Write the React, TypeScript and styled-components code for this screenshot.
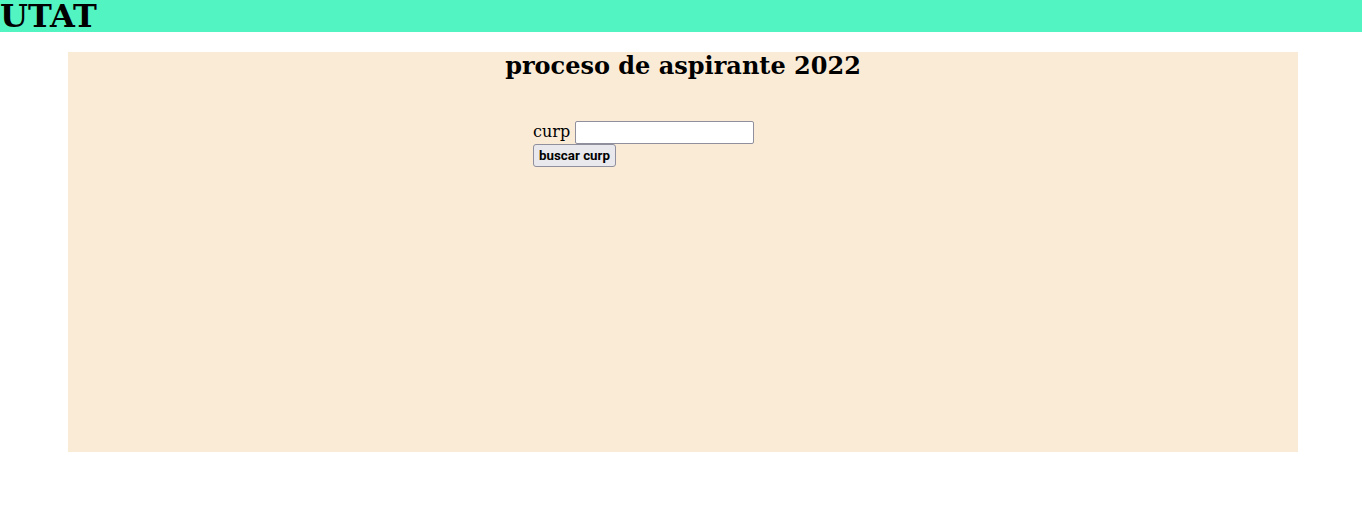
import React from "react";
import styled, { createGlobalStyle } from "styled-components";

const Global = createGlobalStyle`
  body {
    margin: 0;
    font-family: "DejaVu Serif", serif;
    background: #ffffff;
  }
`;

const Header = styled.header`
  height: 32px;
  background: #52f5c2;
  display: flex;
  align-items: center;
`;

const Brand = styled.h1`
  margin: 0;
  font-family: "DejaVu Serif", serif;
  font-weight: bold;
  font-size: 32px;
  line-height: 32px;
  color: #000;
`;

const Panel = styled.main`
  margin: 20px 0 0 68px;
  width: 1230px;
  height: 400px;
  background: #faebd7;
  display: flex;
  flex-direction: column;
  align-items: center;
`;

const Title = styled.h2`
  margin: 0;
  font-family: "DejaVu Serif", serif;
  font-weight: bold;
  font-size: 24px;
  line-height: 28px;
`;

const Form = styled.form`
  width: 300px;
  margin-top: 41px;
  display: flex;
  flex-direction: column;
  align-items: flex-start;
`;

const Row = styled.div`
  display: flex;
  align-items: center;
  gap: 5px;
`;

const Label = styled.label`
  font-family: "DejaVu Serif", serif;
  font-size: 16px;
  line-height: 21px;
  margin-bottom: 2px;
  color: #000;
`;

const Input = styled.input`
  box-sizing: border-box;
  width: 179px;
  height: 23px;
  border: 1px solid #8f8f9d;
  border-radius: 2px;
  background: #fff;
  padding: 1px 2px;
`;

const Button = styled.button`
  box-sizing: border-box;
  height: 23px;
  width: 83px;
  padding: 0;
  border: 1px solid #8f8f9d;
  border-radius: 3px;
  background: #e9e9ed;
  font-family: Roboto, "Liberation Sans", sans-serif;
  font-weight: bold;
  font-size: 13.33px;
  color: #000;
`;

export default function App() {
  return (
    <>
      <Global />
      <Header>
        <Brand>UTAT</Brand>
      </Header>
      <Panel>
        <Title>proceso de aspirante 2022</Title>
        <Form onSubmit={(e) => e.preventDefault()}>
          <Row>
            <Label htmlFor="curp">curp</Label>
            <Input id="curp" type="text" />
          </Row>
          <Button type="submit">buscar curp</Button>
        </Form>
      </Panel>
    </>
  );
}
